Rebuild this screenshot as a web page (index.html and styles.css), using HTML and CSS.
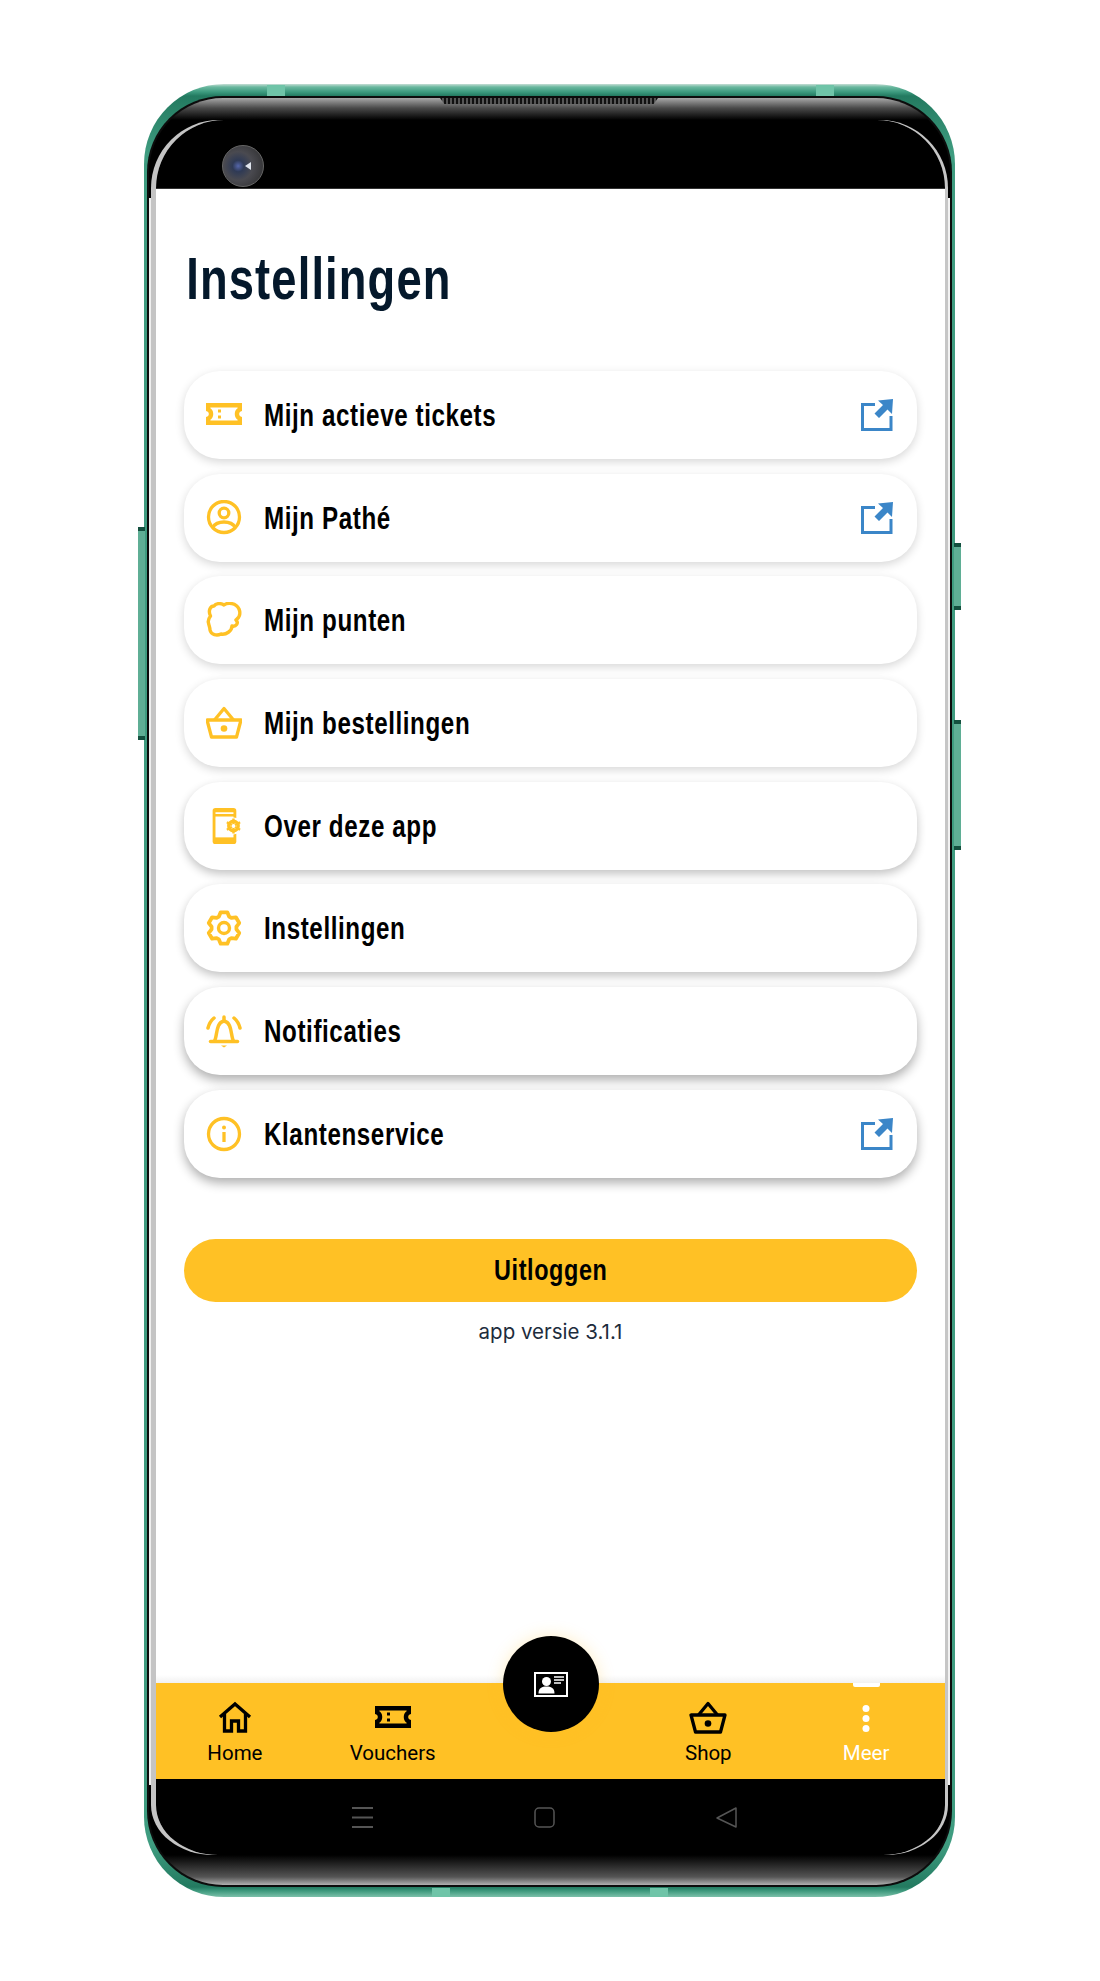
FILE: index.html
```html
<!DOCTYPE html>
<html lang="en">

<head>
    <meta charset="UTF-8">
    <meta name="viewport" content="width=device-width, initial-scale=1.0">
    <title>Instellingen</title>
    <link rel="stylesheet" href="styles.css">
</head>

<body>
    <!-- icons used more than once -->
    <svg class="sprite">
        <symbol id="ticket" viewBox="0 0 36 22">
            <path d="M2.200 2.200H33.800V6.500C30 8 30 14 33.800 15.500V19.800H2.200V15.500C6 14 6 8 2.200 6.500Z" fill="none" stroke="currentColor" stroke-width="4.400" />
            <rect x="12" y="6.500" width="3" height="3" fill="currentColor" />
            <rect x="12" y="12.500" width="3" height="3" fill="currentColor" />
        </symbol>
        <symbol id="basket" viewBox="0 0 38 33">
            <g fill="none" stroke="currentColor" stroke-width="3.300" stroke-linejoin="round">
                <path d="M2 14H36L31.500 31H6.500Z" />
                <path d="M9.500 14L19 2.500L28.500 14" />
            </g>
            <circle cx="19" cy="22.500" r="3.300" fill="currentColor" />
        </symbol>
        <symbol id="external" viewBox="0 0 32 32">
            <path d="M14 5.500H1.500V30.500H30V17" fill="none" stroke="currentColor" stroke-width="3" />
            <path d="M17 1.500L32 0L31 15L26.500 10.500L18 19L13.500 14.500L22 6Z" fill="currentColor" />
        </symbol>
        <symbol id="gear" viewBox="0 0 36 36">
            <polygon points="14.670,2.350 21.330,2.350 23.080,6.580 25.350,7.890 29.890,7.290 33.220,13.060 30.430,16.690 30.430,19.310 33.220,22.940 29.890,28.710 25.350,28.110 23.080,29.420 21.330,33.650 14.670,33.650 12.920,29.420 10.650,28.110 6.110,28.710 2.780,22.940 5.570,19.310 5.570,16.690 2.780,13.060 6.110,7.290 10.650,7.890 12.920,6.580" stroke="currentColor" stroke-width="3.800" stroke-linejoin="round" />
            <circle cx="18" cy="18" r="5.500" stroke="currentColor" stroke-width="3.400" />
        </symbol>
    </svg>

    <div class="phone">
        <span class="glint glint-top-left"></span>
        <span class="glint glint-top-right"></span>
        <span class="glint glint-bottom-left"></span>
        <span class="glint glint-bottom-right"></span>
        <span class="side-key key-left"></span>
        <span class="side-key key-right-top"></span>
        <span class="side-key key-right-bottom"></span>
        <span class="earpiece"></span>

        <div class="bezel">
            <div class="glass">
                <div class="screen">
                    <div class="status-bar">
                        <span class="camera"></span>
                    </div>

                    <main class="content">
                        <h1 class="page-title">Instellingen</h1>

                        <ul class="menu">
                            <li class="menu-item">
                                <svg class="menu-icon"><use href="#ticket" x="0" y="6" width="36" height="22" /></svg>
                                <span class="menu-label">Mijn actieve tickets</span>
                                <svg class="menu-external"><use href="#external" /></svg>
                            </li>
                            <li class="menu-item">
                                <svg class="menu-icon" viewBox="0 0 36 36" fill="none" stroke="currentColor" stroke-width="3.300">
                                    <circle cx="18" cy="17" r="15.500" />
                                    <circle cx="18" cy="13" r="4.800" />
                                    <path d="M6.500 27.500C9 23.500 13.500 22 18 22S27 23.500 29.500 27.500" />
                                </svg>
                                <span class="menu-label">Mijn Pathé</span>
                                <svg class="menu-external"><use href="#external" /></svg>
                            </li>
                            <li class="menu-item">
                                <svg class="menu-icon" viewBox="0 0 36 36" fill="none" stroke="currentColor" stroke-width="3.400" stroke-linejoin="round">
                                    <path d="M8 4C10 1 15 1 18 3C22 0 30 1 33 7C35 12 33 16 30 18C33 21 30 25 26 24C26 29 20 33 15 32C11 34 5 33 4 28C4 25 3 24 2.500 21C1.500 18 3 16 4.500 14C2 9 4 4 8 4Z" />
                                </svg>
                                <span class="menu-label">Mijn punten</span>
                            </li>
                            <li class="menu-item">
                                <svg class="menu-icon"><use href="#basket" x="-1" y="1" width="38" height="33" /></svg>
                                <span class="menu-label">Mijn bestellingen</span>
                            </li>
                            <li class="menu-item">
                                <svg class="menu-icon" viewBox="0 0 36 38">
                                    <rect x="6" y="0" width="25" height="38" rx="3" fill="currentColor" />
                                    <rect x="9" y="4.500" width="19" height="1.800" fill="#fff" />
                                    <rect x="9" y="9" width="19" height="22" fill="#fff" />
                                    <circle cx="28" cy="19" r="9" fill="#fff" />
                                    <circle cx="28" cy="19" r="5" fill="none" stroke="currentColor" stroke-width="3.500" />
                                    <path d="M28 11V27M21 15L35 23M35 15L21 23" stroke="currentColor" stroke-width="2.500" />
                                    <circle cx="28" cy="19" r="2" fill="#fff" />
                                </svg>
                                <span class="menu-label">Over deze app</span>
                            </li>
                            <li class="menu-item">
                                <svg class="menu-icon gear-outline"><use href="#gear" /></svg>
                                <span class="menu-label">Instellingen</span>
                            </li>
                            <li class="menu-item">
                                <svg class="menu-icon" viewBox="0 0 36 36" fill="none" stroke="currentColor" stroke-width="3.500" stroke-linecap="round">
                                    <path d="M4.500 28.500H31.500" />
                                    <path d="M8.500 28C11.500 23 9.500 9.500 18 8C26.500 9.500 24.500 23 27.500 28" />
                                    <path d="M18 4V7" />
                                    <path d="M2 15C3 11 5 7.500 8 5" />
                                    <path d="M34 15C33 11 31 7.500 28 5" />
                                    <path d="M15 32.500H21L18 34.500Z" fill="currentColor" stroke="none" />
                                </svg>
                                <span class="menu-label">Notificaties</span>
                            </li>
                            <li class="menu-item">
                                <svg class="menu-icon" viewBox="0 0 36 36" fill="none" stroke="currentColor" stroke-width="3.300">
                                    <circle cx="18" cy="18" r="15.500" />
                                    <circle cx="18" cy="11.500" r="2" fill="currentColor" stroke="none" />
                                    <path d="M18 16V26" />
                                </svg>
                                <span class="menu-label">Klantenservice</span>
                                <svg class="menu-external"><use href="#external" /></svg>
                            </li>
                        </ul>

                        <button class="logout"><span class="logout-label">Uitloggen</span></button>
                        <p class="version">app versie 3.1.1</p>
                    </main>

                    <nav class="tabs">
                        <a class="tab">
                            <svg class="tab-icon" viewBox="0 0 38 33" fill="none" stroke="currentColor" stroke-width="3.300">
                                <path d="M4 16L19 3L34 16" />
                                <path d="M8.500 13V30H15.500V20H22.500V30H29.500V13" />
                            </svg>
                            Home
                        </a>
                        <a class="tab">
                            <svg class="tab-icon"><use href="#ticket" x="1" y="5" width="36" height="22" /></svg>
                            Vouchers
                        </a>
                        <a class="tab tab-scan">
                            <span class="scan-button">
                                <svg class="scan-icon" viewBox="0 0 34 25">
                                    <rect x="1" y="1" width="32" height="23" fill="none" stroke="#fff" stroke-width="2" />
                                    <circle cx="12.500" cy="9.500" r="4.500" fill="#fff" />
                                    <path d="M4.500 21.500C4.500 16 8 14.500 12.500 14.500S20.500 16 20.500 21.500Z" fill="#fff" />
                                    <path d="M20 5H30M20 8H30M20 11H27" stroke="#fff" stroke-width="1.300" />
                                </svg>
                            </span>
                        </a>
                        <a class="tab">
                            <svg class="tab-icon"><use href="#basket" /></svg>
                            Shop
                        </a>
                        <a class="tab tab-active">
                            <svg class="tab-icon" viewBox="0 0 38 33" fill="currentColor">
                                <circle cx="19" cy="7.500" r="3.500" />
                                <circle cx="19" cy="17.500" r="3.500" />
                                <circle cx="19" cy="27.500" r="3.500" />
                            </svg>
                            Meer
                        </a>
                    </nav>

                    <div class="system-bar">
                        <svg class="system-icon" viewBox="0 0 21 21" stroke="#555" stroke-width="2">
                            <path d="M0 1H21M0 10.500H21M0 20H21" />
                        </svg>
                        <svg class="system-icon" viewBox="0 0 21 21" fill="none" stroke="#555" stroke-width="1.500">
                            <rect x="1" y="1" width="19" height="19" rx="4" />
                        </svg>
                        <svg class="system-icon" viewBox="0 0 21 21" fill="none" stroke="#555" stroke-width="1.500" stroke-linejoin="round">
                            <path d="M20 1V20L1 11Z" />
                        </svg>
                    </div>
                </div>
            </div>
        </div>
    </div>
</body>

</html>
```

FILE: styles.css
```css
* {
    box-sizing: border-box;
}

body {
    height: 1981px;
    margin: 0;
    padding: 84px 0 0 144px;
    background: #fff;
    overflow: hidden;
}

.sprite {
    display: none;
}

/* toestel */
.phone {
    position: relative;
    display: flex;
    width: 811px;
    height: 1813px;
    padding: 12px 3px 10px 3px;
    border-radius: 80px;
    background: linear-gradient(#c6ded5, #6ab89f 3px, #3c9a7e 8px, #237a60 12px, #3f9c80 70px, #3f9c80 1760px, #237a60 1803px, #3f9a7e 1807px, #7cc0aa 1813px);
}

.glint {
    position: absolute;
    width: 18px;
    height: 11px;
    background: #6fc4a8;
}

.glint-top-left {
    top: 1px;
    left: 123px;
}

.glint-top-right {
    top: 1px;
    left: 672px;
}

.glint-bottom-left {
    bottom: 0;
    left: 288px;
    height: 9px;
}

.glint-bottom-right {
    bottom: 0;
    left: 506px;
    height: 9px;
}

.side-key {
    position: absolute;
    width: 7px;
    background: #5fae95;
    border-top: 4px solid #14503f;
    border-bottom: 4px solid #14503f;
}

.key-left {
    top: 443px;
    left: -6px;
    height: 213px;
}

.key-right-top {
    top: 459px;
    right: -6px;
    height: 67px;
}

.key-right-bottom {
    top: 636px;
    right: -6px;
    height: 130px;
}

.earpiece {
    position: absolute;
    top: 14px;
    left: 296px;
    width: 218px;
    height: 6px;
    z-index: 1;
    background: repeating-linear-gradient(90deg, #111 0, #111 2px, #555 2px, #555 4px);
    clip-path: polygon(0 0, 100% 0, 98% 100%, 2% 100%);
}

.bezel {
    flex: 1;
    display: flex;
    padding: 2px;
    border-radius: 76px;
    background: #0c0c0c;
}

.glass {
    flex: 1;
    display: flex;
    padding: 22px 5px 30px 7px;
    border-radius: 74px;
    background:
        linear-gradient(90deg, #eee 2px, transparent 2px, transparent calc(100% - 2px), #f2f2f2 calc(100% - 2px)) center / 100% calc(100% - 200px) no-repeat,
        linear-gradient(#a8a8a8, #4a4a4a 10px, #000 22px, #000 calc(100% - 30px), #555 calc(100% - 8px), #b0b0b0);
}

/* het zilver van de gebogen rand volgt de hoeken van het scherm */
.screen {
    flex: 1;
    display: flex;
    flex-direction: column;
    position: relative;
    overflow: hidden;
    border-radius: 68px 68px 62px 62px / 68px 68px 50px 50px;
    background: #fff;
    box-shadow: -5px 0 0 #c4c4c4, 3px 0 0 #c6c6c6;
}

.status-bar {
    height: 69px;
    background: #000;
    border-bottom: 1px solid #333;
}

.camera {
    position: absolute;
    top: 25px;
    left: 66px;
    width: 42px;
    height: 42px;
    border-radius: 50%;
    border: 1px solid #666;
    background: radial-gradient(circle at 38% 50%, #5566aa 0, #2f3a55 18%, #4a4a50 45%, #2a2a2a 100%);
}

.camera::after {
    content: "";
    position: absolute;
    top: 16px;
    left: 22px;
    width: 6px;
    height: 8px;
    background: #dfe4ee;
    clip-path: polygon(0 50%, 100% 0, 100% 100%);
}

/* inhoud */
.content {
    flex: 1;
    display: flex;
    flex-direction: column;
    padding: 55px 28px 0;
    background: linear-gradient(#fff calc(100% - 8px), #f1f1f1);
}

.page-title {
    margin: 0 0 57px;
    padding-left: 3px;
    font-family: "Liberation Sans", sans-serif;
    font-size: 60px;
    line-height: 70px;
    font-weight: 700;
    letter-spacing: 1.5px;
    color: #04182b;
    transform: scaleX(.755);
    transform-origin: left;
}

.menu {
    display: flex;
    flex-direction: column;
    gap: 14.7px;
    margin: 0;
    padding: 0;
    list-style: none;
}

.menu-item {
    display: flex;
    align-items: center;
    height: 88px;
    padding: 0 24px 0 22px;
    border-radius: 36px;
    background: #fff;
    box-shadow: 0 3px 10px rgba(0, 0, 0, .16);
    color: #ffc125;
}

.menu-item:nth-child(n+5) {
    box-shadow: 0 4px 10px rgba(0, 0, 0, .24);
}

.menu-item:nth-child(n+7) {
    box-shadow: 0 5px 11px rgba(0, 0, 0, .32);
}

.menu-icon {
    flex: none;
    width: 36px;
    height: 36px;
    margin-right: 22px;
}

.gear-outline {
    fill: none;
}

.menu-label {
    flex: 1;
    padding-top: 1px;
    font-family: "Liberation Sans", sans-serif;
    font-size: 32px;
    font-weight: 700;
    letter-spacing: .8px;
    color: #000;
    transform: scaleX(.755);
    transform-origin: left;
}

.menu-external {
    flex: none;
    width: 32px;
    height: 32px;
    color: #3b86c8;
}

.logout {
    height: 63px;
    margin-top: 61px;
    border: 0;
    border-radius: 32px;
    background: #ffc125;
    color: #000;
}

.logout-label {
    display: inline-block;
    font-family: "Liberation Sans", sans-serif;
    font-size: 30px;
    font-weight: 700;
    letter-spacing: .8px;
    transform: scaleX(.78);
}

.version {
    margin: 17px 0 0;
    text-align: center;
    font-family: Inter, sans-serif;
    font-size: 20.5px;
    line-height: 26px;
    color: #1d2c3c;
}

/* tabbar */
.tabs {
    position: relative;
    display: grid;
    grid-template-columns: repeat(5, 1fr);
    height: 96px;
    background: #ffc125;
}

.tab {
    display: flex;
    flex-direction: column;
    align-items: center;
    padding-top: 18px;
    font-family: Roboto, sans-serif;
    font-size: 20.5px;
    line-height: 24px;
    color: #000;
}

.tab-icon {
    width: 38px;
    height: 33px;
    margin-bottom: 7px;
}

.tab-active {
    position: relative;
    color: #fff;
}

.tab-active::before {
    content: "";
    position: absolute;
    top: 0;
    left: 50%;
    width: 27px;
    height: 4px;
    margin-left: -13.5px;
    border-radius: 0 0 2px 2px;
    background: #fff;
}

.scan-button {
    position: absolute;
    top: -47px;
    left: 50%;
    display: flex;
    align-items: center;
    justify-content: center;
    width: 96px;
    height: 96px;
    margin-left: -48px;
    border-radius: 50%;
    background: #000;
    box-shadow: 0 0 16px rgba(255, 193, 37, .25);
}

.scan-icon {
    width: 34px;
    height: 25px;
}

.system-bar {
    display: flex;
    align-items: center;
    justify-content: center;
    gap: 161px;
    height: 76px;
    padding-right: 12px;
    background: #000;
}

.system-icon {
    width: 21px;
    height: 21px;
}
```
